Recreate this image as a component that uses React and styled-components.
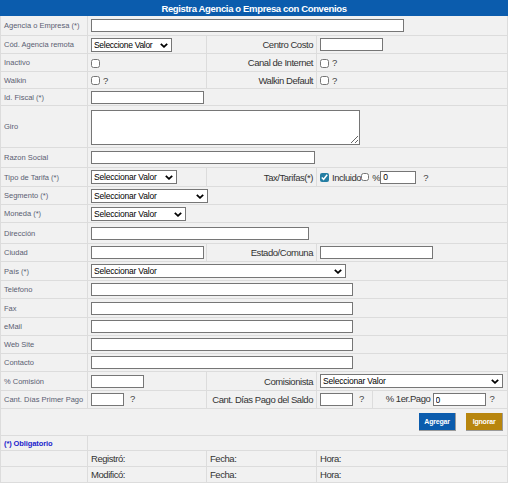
import styled, { createGlobalStyle } from "styled-components";

const Global = createGlobalStyle`
  body {
    margin: 0;
    background: #ffffff;
    font-family: "Liberation Sans", Arial, sans-serif;
  }
`;

const Table = styled.table`
  border-collapse: collapse;
  table-layout: fixed;
  width: 507px;
  font-family: "Liberation Sans", Arial, sans-serif;
`;

const Row = styled.tr`
  height: ${(p) => p.$h}px;
`;

const Title = styled.th`
  background: #0b5cad;
  color: #ffffff;
  font-size: 9.5px;
  font-weight: bold;
  letter-spacing: -0.35px;
  text-align: center;
  padding: 0;
  border: 1px solid #0b5cad;
`;

const Cell = styled.td`
  background: #f1f1f1;
  border: 1px solid #dcdcdc;
  padding: 0 3px;
  vertical-align: middle;
  white-space: nowrap;
  font-size: 9.5px;
  letter-spacing: -0.45px;
  color: #333333;
  text-align: ${(p) => p.$align || "left"};
`;

const Label = styled(Cell)`
  font-size: 7.5px;
  letter-spacing: 0;
  color: #5a6072;
  padding-left: 3px;
`;

const Required = styled(Cell)`
  font-size: 7.5px;
  font-weight: bold;
  letter-spacing: -0.1px;
  color: #2222cc;
`;

const Input = styled.input`
  box-sizing: border-box;
  width: ${(p) => p.$w}px;
  height: 13px;
  border: 1px solid #767676;
  background: #ffffff;
  padding: 0 2px;
  margin: 0;
  font-family: "Liberation Sans", Arial, sans-serif;
  font-size: 8.5px;
  vertical-align: middle;
`;

const Area = styled.textarea`
  box-sizing: border-box;
  width: 269px;
  height: 35px;
  border: 1px solid #767676;
  margin: 2px 0 0;
  padding: 2px;
  display: block;
`;

const SelectBox = styled.span`
  position: relative;
  display: inline-block;
  width: ${(p) => p.$w}px;
  height: 14px;
  vertical-align: middle;
`;

const Select = styled.select`
  appearance: none;
  box-sizing: border-box;
  width: 100%;
  height: 100%;
  border: 1px solid #767676;
  border-radius: 0;
  background: #ffffff;
  margin: 0;
  padding: 0 2px;
  font-family: "Liberation Sans", Arial, sans-serif;
  font-size: 8.5px;
  letter-spacing: ${(p) => (p.$tight ? -0.3 : -0.2)}px;
  color: #000000;
`;

const Chevron = styled.svg`
  position: absolute;
  right: 4px;
  top: 5px;
  pointer-events: none;
`;

const Check = styled.input`
  width: 9px;
  height: 9px;
  margin: 0;
  vertical-align: middle;
  accent-color: #247ea3;
`;

const Hint = styled.span`
  margin-left: ${(p) => p.$ml ?? 4}px;
  color: #444444;
  font-size: 9.5px;
`;

const Inline = styled.span`
  display: inline-flex;
  align-items: center;
  vertical-align: middle;
`;

const ButtonCell = styled(Cell)`
  text-align: right;
  padding-right: 4px;
`;

const Button = styled.button`
  box-sizing: border-box;
  width: 37px;
  height: 18px;
  margin-left: 10px;
  padding: 0;
  border: none;
  border-right: 1px solid #9a9a9a;
  border-bottom: 1px solid #9a9a9a;
  background: ${(p) => p.$bg};
  color: #ffffff;
  font-family: "Liberation Sans", Arial, sans-serif;
  font-size: 7px;
  font-weight: bold;
  letter-spacing: -0.2px;
  vertical-align: middle;
`;

const Dropdown = ({ w, text, tight }) => (
  <SelectBox $w={w}>
    <Select $tight={tight} defaultValue="v">
      <option value="v">{text}</option>
    </Select>
    <Chevron width="8" height="5" viewBox="0 0 8 5">
      <path d="M0.8 0.8 L4 3.8 L7.2 0.8" fill="none" stroke="#000" strokeWidth="1.8" />
    </Chevron>
  </SelectBox>
);

const simpleRows = [
  ["Teléfono", 18, 262],
  ["Fax", 19, 262],
  ["eMail", 18, 262],
  ["Web Site", 18, 262],
  ["Contacto", 18, 262],
];

export default function App() {
  return (
    <>
      <Global />
      <Table>
        <colgroup>
          <col style={{ width: 87 }} />
          <col style={{ width: 119 }} />
          <col style={{ width: 110 }} />
          <col style={{ width: 56 }} />
          <col style={{ width: 135 }} />
        </colgroup>
        <tbody>
          <Row $h={15}>
            <Title colSpan={5}>Registra Agencia o Empresa con Convenios</Title>
          </Row>
          <Row $h={20}>
            <Label>Agencia o Empresa (*)</Label>
            <Cell colSpan={4}>
              <Input $w={313} />
            </Cell>
          </Row>
          <Row $h={18}>
            <Label>Cód. Agencia remota</Label>
            <Cell>
              <Dropdown w={81} text="Seleccione Valor" tight />
            </Cell>
            <Cell $align="right">Centro Costo</Cell>
            <Cell colSpan={2}>
              <Input $w={63} />
            </Cell>
          </Row>
          <Row $h={18}>
            <Label>Inactivo</Label>
            <Cell>
              <Check type="checkbox" />
            </Cell>
            <Cell $align="right">Canal de Internet</Cell>
            <Cell colSpan={2}>
              <Check type="checkbox" />
              <Hint $ml={3}>?</Hint>
            </Cell>
          </Row>
          <Row $h={17}>
            <Label>Walkin</Label>
            <Cell>
              <Check type="checkbox" />
              <Hint $ml={3}>?</Hint>
            </Cell>
            <Cell $align="right">Walkin Default</Cell>
            <Cell colSpan={2}>
              <Check type="checkbox" />
              <Hint $ml={3}>?</Hint>
            </Cell>
          </Row>
          <Row $h={17}>
            <Label>Id. Fiscal (*)</Label>
            <Cell colSpan={4}>
              <Input $w={113} />
            </Cell>
          </Row>
          <Row $h={42}>
            <Label>Giro</Label>
            <Cell colSpan={4}>
              <Area />
            </Cell>
          </Row>
          <Row $h={20}>
            <Label>Razon Social</Label>
            <Cell colSpan={4}>
              <Input $w={224} />
            </Cell>
          </Row>
          <Row $h={19}>
            <Label>Tipo de Tarifa (*)</Label>
            <Cell>
              <Dropdown w={86} text="Seleccionar Valor" />
            </Cell>
            <Cell $align="right">Tax/Tarifas(*)</Cell>
            <Cell colSpan={2}>
              <Inline>
                <Check type="checkbox" defaultChecked />
                <Hint $ml={3} style={{ color: "#333" }}>Incluido</Hint>
                <Check type="checkbox" style={{ width: 8, height: 8 }} />
                <Hint $ml={3} style={{ color: "#333" }}>%</Hint>
                <Input $w={36} defaultValue="0" />
                <Hint $ml={7}>?</Hint>
              </Inline>
            </Cell>
          </Row>
          <Row $h={18}>
            <Label>Segmento (*)</Label>
            <Cell colSpan={4}>
              <Dropdown w={117} text="Seleccionar Valor" />
            </Cell>
          </Row>
          <Row $h={18}>
            <Label>Moneda (*)</Label>
            <Cell colSpan={4}>
              <Dropdown w={95} text="Seleccionar Valor" />
            </Cell>
          </Row>
          <Row $h={21}>
            <Label>Dirección</Label>
            <Cell colSpan={4}>
              <Input $w={218} />
            </Cell>
          </Row>
          <Row $h={18}>
            <Label>Ciudad</Label>
            <Cell>
              <Input $w={113} />
            </Cell>
            <Cell $align="right">Estado/Comuna</Cell>
            <Cell colSpan={2}>
              <Input $w={113} />
            </Cell>
          </Row>
          <Row $h={19}>
            <Label>País (*)</Label>
            <Cell colSpan={4}>
              <Dropdown w={255} text="Seleccionar Valor" />
            </Cell>
          </Row>
          {simpleRows.map(([name, h, w]) => (
            <Row $h={h} key={name}>
              <Label>{name}</Label>
              <Cell colSpan={4}>
                <Input $w={w} />
              </Cell>
            </Row>
          ))}
          <Row $h={19}>
            <Label>% Comisión</Label>
            <Cell>
              <Input $w={53} />
            </Cell>
            <Cell $align="right">Comisionista</Cell>
            <Cell colSpan={2}>
              <Dropdown w={183} text="Seleccionar Valor" />
            </Cell>
          </Row>
          <Row $h={18}>
            <Label>Cant. Días Primer Pago</Label>
            <Cell>
              <Input $w={33} />
              <Hint $ml={6}>?</Hint>
            </Cell>
            <Cell $align="right">Cant. Días Pago del Saldo</Cell>
            <Cell>
              <Input $w={33} />
              <Hint $ml={6}>?</Hint>
            </Cell>
            <Cell $align="center">
              % 1er.Pago <Input $w={53} defaultValue="0" />
              <Hint $ml={4}>?</Hint>
            </Cell>
          </Row>
          <Row $h={27}>
            <ButtonCell colSpan={5}>
              <Button $bg="#0b5cad">Agregar</Button>
              <Button $bg="#b8860e">Ignorar</Button>
            </ButtonCell>
          </Row>
          <Row $h={15}>
            <Required>(*) Obligatorio</Required>
            <Cell colSpan={4} />
          </Row>
          <Row $h={16}>
            <Cell />
            <Cell>Registró:</Cell>
            <Cell>Fecha:</Cell>
            <Cell colSpan={2}>Hora:</Cell>
          </Row>
          <Row $h={16}>
            <Cell />
            <Cell>Modificó:</Cell>
            <Cell>Fecha:</Cell>
            <Cell colSpan={2}>Hora:</Cell>
          </Row>
        </tbody>
      </Table>
    </>
  );
}
